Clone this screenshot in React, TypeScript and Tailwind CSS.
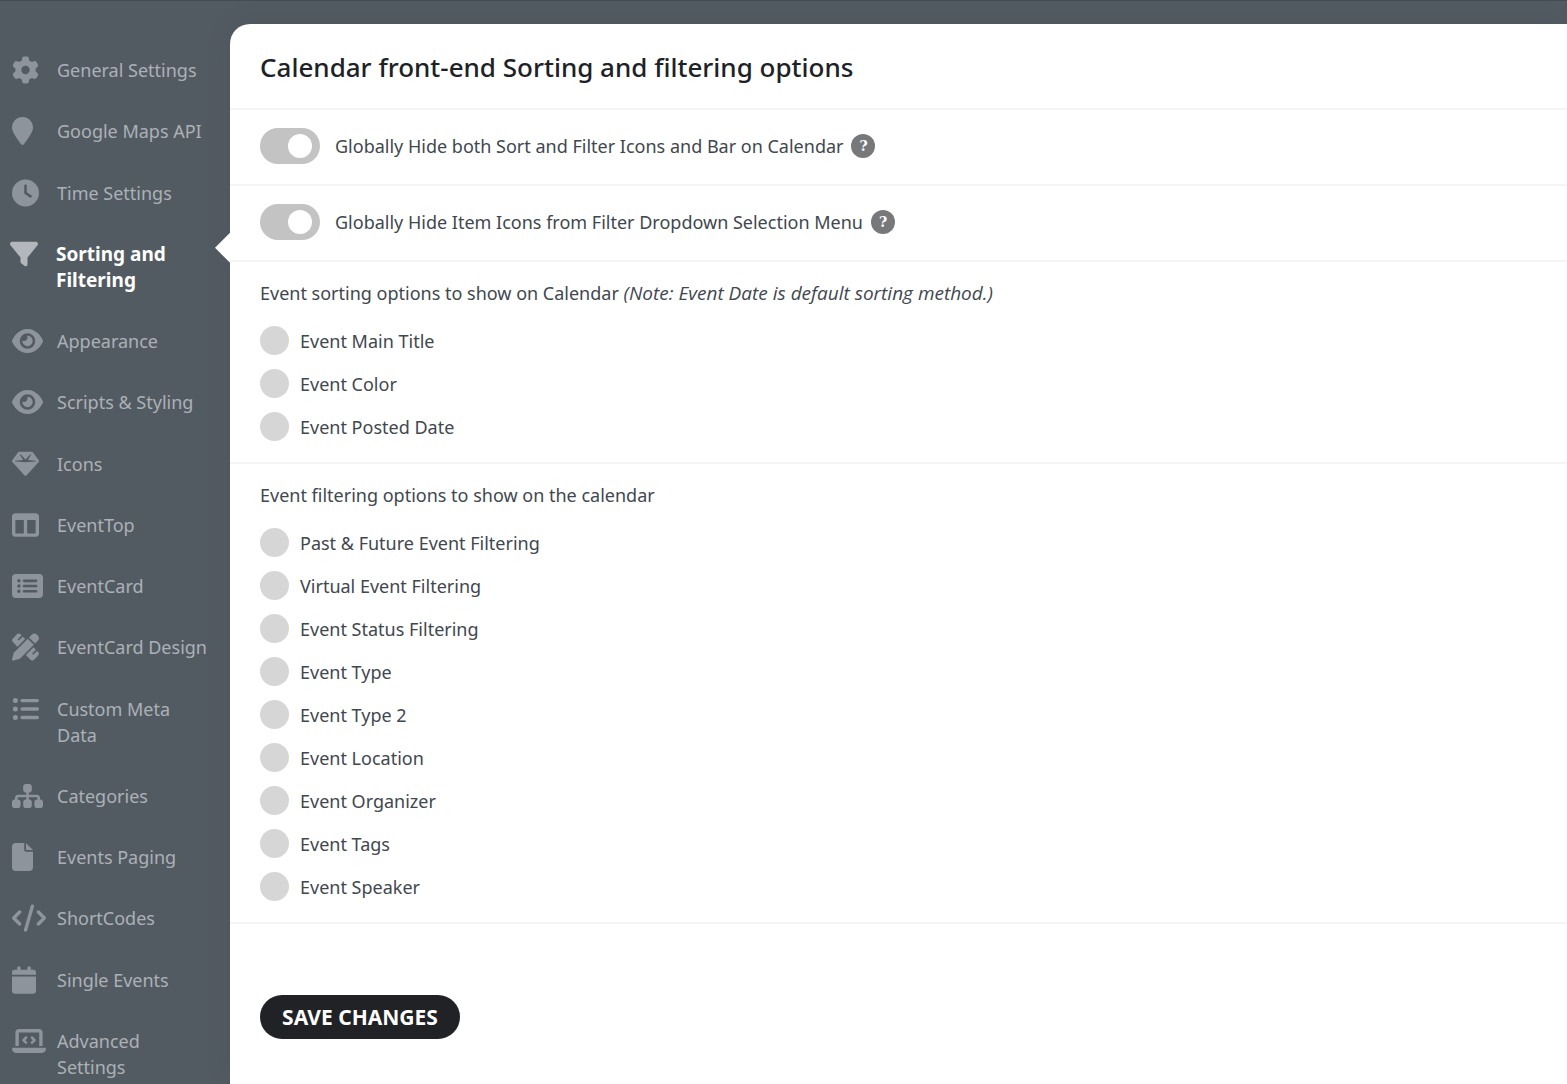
import { useState } from 'react';
import type { ReactNode } from 'react';
import type { IconType } from 'react-icons';
import {
  FaCalendar,
  FaClock,
  FaCode,
  FaEye,
  FaFile,
  FaFilter,
  FaGear,
  FaGem,
  FaLaptopCode,
  FaListUl,
  FaLocationPin,
  FaPenRuler,
  FaRectangleList,
  FaSitemap,
  FaTableColumns,
} from 'react-icons/fa6';

interface NavEntry {
  id: string;
  label: string;
  Icon: IconType;
  width: string;
}

// Glyphs share one height, so each needs its own natural width
const NAV_ITEMS: NavEntry[] = [
  { id: 'general', label: 'General Settings', Icon: FaGear, width: 'w-[27px]' },
  { id: 'maps', label: 'Google Maps API', Icon: FaLocationPin, width: 'w-[21px]' },
  { id: 'time', label: 'Time Settings', Icon: FaClock, width: 'w-[27px]' },
  { id: 'sorting', label: 'Sorting and Filtering', Icon: FaFilter, width: 'w-7' },
  { id: 'appearance', label: 'Appearance', Icon: FaEye, width: 'w-[31px]' },
  { id: 'scripts', label: 'Scripts & Styling', Icon: FaEye, width: 'w-[31px]' },
  { id: 'icons', label: 'Icons', Icon: FaGem, width: 'w-[27px]' },
  { id: 'eventtop', label: 'EventTop', Icon: FaTableColumns, width: 'w-[27px]' },
  { id: 'eventcard', label: 'EventCard', Icon: FaRectangleList, width: 'w-[31px]' },
  { id: 'design', label: 'EventCard Design', Icon: FaPenRuler, width: 'w-[27px]' },
  { id: 'meta', label: 'Custom Meta Data', Icon: FaListUl, width: 'w-[27px]' },
  { id: 'categories', label: 'Categories', Icon: FaSitemap, width: 'w-[31px]' },
  { id: 'paging', label: 'Events Paging', Icon: FaFile, width: 'w-[21px]' },
  { id: 'shortcodes', label: 'ShortCodes', Icon: FaCode, width: 'w-[34px]' },
  { id: 'single', label: 'Single Events', Icon: FaCalendar, width: 'w-6' },
  { id: 'advanced', label: 'Advanced Settings', Icon: FaLaptopCode, width: 'w-[34px]' },
];

const SORT_OPTIONS = ['Event Main Title', 'Event Color', 'Event Posted Date'];

const FILTER_OPTIONS = [
  'Past & Future Event Filtering',
  'Virtual Event Filtering',
  'Event Status Filtering',
  'Event Type',
  'Event Type 2',
  'Event Location',
  'Event Organizer',
  'Event Tags',
  'Event Speaker',
];

export default function App() {
  const [active, setActive] = useState('sorting');

  return (
    <div className="flex min-h-screen border-t border-[#454c53] bg-[#535b62] font-['Noto_Sans',sans-serif] text-[18px] leading-[26px] text-[#3f474f]">
      <nav className="w-[230px] shrink-0">
        <ul className="flex h-full flex-col justify-between gap-8 pt-14 pb-1">
          {NAV_ITEMS.map((item) => (
            <NavItem key={item.id} item={item} isActive={active === item.id} onSelect={setActive} />
          ))}
        </ul>
      </nav>

      <main className="mt-[23px] min-w-0 flex-1 rounded-tl-[20px] bg-white shadow-[0_0_30px_rgba(0,0,0,0.07)]">
        <h1 className="border-b-2 border-[#f5f5f6] px-[30px] pt-[25px] pb-[23px] text-[26px] leading-9 font-medium text-[#1d2227]">
          Calendar front-end Sorting and filtering options
        </h1>

        <ToggleRow id="hide-bar" label="Globally Hide both Sort and Filter Icons and Bar on Calendar" />
        <ToggleRow id="hide-icons" label="Globally Hide Item Icons from Filter Dropdown Selection Menu" />

        <OptionGroup
          legend={
            <>
              Event sorting options to show on Calendar{' '}
              <em className="font-['Open_Sans',sans-serif] text-[19px]">
                (Note: Event Date is default sorting method.)
              </em>
            </>
          }
          options={SORT_OPTIONS}
        />
        <OptionGroup legend="Event filtering options to show on the calendar" options={FILTER_OPTIONS} />

        <div className="px-[30px] pt-[71px]">
          <button
            type="submit"
            className="h-11 w-[200px] cursor-pointer rounded-full bg-[#202226] text-[21px] font-bold text-white"
          >
            SAVE CHANGES
          </button>
        </div>
      </main>
    </div>
  );
}

function NavItem({
  item,
  isActive,
  onSelect,
}: {
  item: NavEntry;
  isActive: boolean;
  onSelect: (id: string) => void;
}) {
  return (
    <li className="relative">
      <a
        href={`#${item.id}`}
        onClick={() => onSelect(item.id)}
        className={
          isActive
            ? 'flex items-start pl-[10px] text-[19px] font-bold text-white'
            : 'flex items-start pl-3 text-[#abb1b7]'
        }
      >
        <span
          className={
            isActive
              ? 'flex h-[26px] w-[46px] shrink-0 items-center text-[#b3b7bb]'
              : 'flex h-[26px] w-[45px] shrink-0 items-center text-[#8d949c]'
          }
        >
          <item.Icon className={`h-7 ${item.width}`} />
        </span>
        <span className="w-[154px]">{item.label}</span>
      </a>
      {/* Notch that joins the active item to the panel */}
      {isActive && (
        <span className="absolute -top-2 right-0 h-[30px] w-[15px] bg-white [clip-path:polygon(100%_0,0_50%,100%_100%)]" />
      )}
    </li>
  );
}

function ToggleRow({ id, label }: { id: string; label: string }) {
  return (
    <div className="flex items-center border-b-2 border-[#f5f5f6] px-[30px] pt-[18px] pb-5">
      <input
        id={id}
        type="checkbox"
        role="switch"
        className="flex h-9 w-[60px] shrink-0 cursor-pointer appearance-none items-center justify-end rounded-full bg-[#c3c3c3] px-2 before:size-6 before:rounded-full before:bg-white checked:justify-start checked:bg-[#202226]"
      />
      <label htmlFor={id} className="ml-[15px] cursor-pointer">
        {label}
      </label>
      <button
        type="button"
        aria-label="Help"
        className="ml-2 size-6 shrink-0 rounded-full bg-[#77787a] font-['DejaVu_Serif',serif] text-[14px] leading-6 font-bold text-white"
      >
        ?
      </button>
    </div>
  );
}

function OptionGroup({ legend, options }: { legend: ReactNode; options: string[] }) {
  return (
    <fieldset className="border-b-2 border-[#f5f5f6] px-[30px] pt-[18px] pb-[14px]">
      <legend className="float-left mb-[13px] w-full">{legend}</legend>
      <div className="clear-both">
        {options.map((option) => (
          <label key={option} className="flex h-[43px] cursor-pointer items-center gap-[11px]">
            <input
              type="checkbox"
              className="size-[29px] shrink-0 cursor-pointer appearance-none rounded-full bg-[#d6d6d6] checked:bg-[#202226]"
            />
            {option}
          </label>
        ))}
      </div>
    </fieldset>
  );
}
